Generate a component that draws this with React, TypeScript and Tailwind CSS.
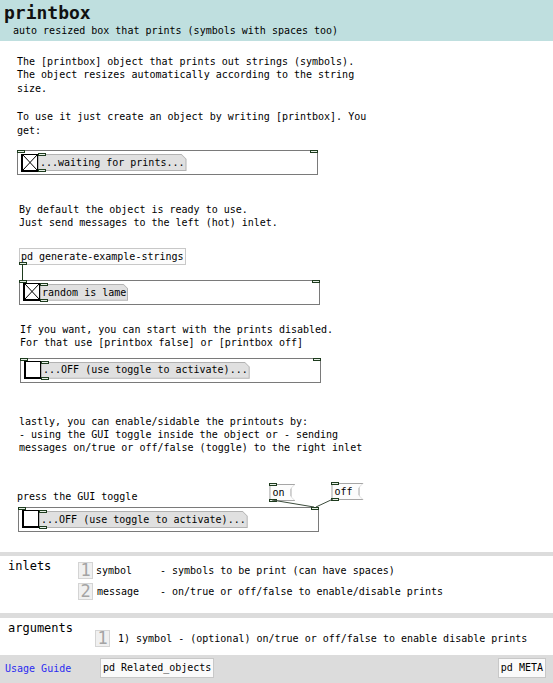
import React from "react";

function Nub({ className }: { className: string }) {
  return (
    <span
      className={
        "absolute block w-[8px] h-[3px] border border-[#1e3b1e] bg-[#e6efe6] " +
        className
      }
    />
  );
}

function Toggle({ on }: { on: boolean }) {
  return (
    <svg width="17" height="18" viewBox="0 0 17 18" className="block shrink-0">
      <rect x="0.5" y="0.5" width="16" height="17" fill="#fff" stroke="#000" />
      <rect x="0" y="0" width="2" height="18" fill="#000" />
      <rect x="0" y="16" width="17" height="2" fill="#000" />
      {on && (
        <>
          <line x1="2" y1="1" x2="16" y2="16" stroke="#000" strokeWidth="1" />
          <line x1="16" y1="1" x2="2" y2="16" stroke="#000" strokeWidth="1" />
        </>
      )}
    </svg>
  );
}

function Atom({ text }: { text: string }) {
  return (
    <div className="relative">
      <div className="h-[17px] bg-[#b2b2b2] p-px [clip-path:polygon(0_0,calc(100%_-_5px)_0,100%_5px,100%_100%,0_100%)]">
        <div className="h-full bg-[#e0e0e0] flex items-center pl-[1px] pr-[1px] whitespace-pre [clip-path:polygon(0_0,calc(100%_-_4px)_0,100%_4px,100%_100%,0_100%)]">
          {text}
        </div>
      </div>
      <Nub className="top-[-1px] left-0" />
      <Nub className="bottom-[-1px] left-0" />
    </div>
  );
}

function PrintBox({ on, text, className }: { on: boolean; text: string; className: string }) {
  return (
    <div className={"relative h-[25px] w-[301px] border border-[#7a7a7a] bg-white " + className}>
      <Nub className="top-[-1px] left-[-1px]" />
      <Nub className="top-[-1px] right-[-1px]" />
      <div className="flex items-center h-full pl-[3px]">
        <Toggle on={on} />
        <Atom text={text} />
      </div>
    </div>
  );
}

function Msg({ text, className }: { text: string; className: string }) {
  return (
    <div className={"relative " + className}>
      <div className="h-[17px] bg-[#a6a6a6] p-px [clip-path:polygon(0_0,100%_0,calc(100%_-_4px)_4px,calc(100%_-_4px)_calc(100%_-_4px),100%_100%,0_100%)]">
        <div className="h-full bg-[#fcfcfc] flex items-center pl-[2px] pr-[10px] [clip-path:polygon(0_0,100%_0,calc(100%_-_4px)_4px,calc(100%_-_4px)_calc(100%_-_4px),100%_100%,0_100%)]">
          {text}
        </div>
      </div>
      <Nub className="top-[-1px] left-0" />
      <Nub className="bottom-[-1px] left-0" />
    </div>
  );
}

function NumBox({ n, className }: { n: string; className: string }) {
  return (
    <div
      className={
        "w-[15px] h-[17px] bg-[#f0f0f0] border border-[#d4d4d4] flex items-center justify-center text-[17px] leading-none text-[#a4a4a4] " +
        className
      }
    >
      {n}
    </div>
  );
}

export default function App() {
  return (
    <div className="w-[553px] h-[683px] bg-white text-black font-['DejaVu_Sans_Mono',monospace] text-[10px] leading-[13.4px] overflow-hidden flex flex-col">
      {/* header */}
      <div className="h-[41px] bg-[#bfdfdf] shrink-0">
        <div className="pl-[4px] pt-[2px] text-[18px] leading-[22px] font-bold text-[#111]">printbox</div>
        <div className="pl-[13px] leading-[13px]">auto resized box that prints (symbols with spaces too)</div>
      </div>

      <div className="pl-[17px] mt-[14px] whitespace-pre">
        <div>The [printbox] object that prints out strings (symbols).</div>
        <div>The object resizes automatically according to the string</div>
        <div>size.</div>
      </div>
      <div className="pl-[17px] mt-[15px] whitespace-pre">
        <div>To use it just create an object by writing [printbox]. You</div>
        <div>get:</div>
      </div>

      <PrintBox on={true} text="...waiting for prints..." className="ml-[17px] mt-[13px]" />

      <div className="pl-[19px] mt-[28px] whitespace-pre">
        <div>By default the object is ready to use.</div>
        <div>Just send messages to the left (hot) inlet.</div>
      </div>

      <div className="relative ml-[19px] mt-[18px]">
        <div className="relative w-[167px] h-[17px] bg-[#fcfcfc] border border-[#c8c8c8] flex items-center pl-[1px] whitespace-pre">
          pd generate-example-strings
          <Nub className="bottom-[-1px] left-[-1px]" />
        </div>
        <div className="ml-[3px] w-px h-[15px] bg-[#1e3b1e]" />
        <PrintBox on={true} text="random is lame" className="" />
      </div>

      <div className="pl-[20px] mt-[18px] whitespace-pre">
        <div>If you want, you can start with the prints disabled.</div>
        <div>For that use [printbox false] or [printbox off]</div>
      </div>

      <PrintBox on={false} text="...OFF (use toggle to activate)..." className="ml-[20px] mt-[8px]" />

      <div className="pl-[19px] mt-[32px] whitespace-pre">
        <div>lastly, you can enable/sidable the printouts by:</div>
        <div>- using the GUI toggle inside the object or - sending</div>
        <div>messages on/true or off/false (toggle) to the right inlet</div>
      </div>

      <div className="relative mt-[27px]">
        <div className="flex items-end h-[25px]">
          <div className="pl-[17px] whitespace-pre mb-[3px]">press the GUI toggle</div>
          <Msg text="on" className="ml-[132px] mb-[6px]" />
          <Msg text="off" className="ml-[36px] mb-[7px]" />
        </div>
        <PrintBox on={false} text="...OFF (use toggle to activate)..." className="ml-[18px]" />
        <svg className="absolute left-0 top-0 pointer-events-none" width="553" height="60">
          <line x1="272" y1="18" x2="314" y2="25" stroke="#3c4c3c" strokeWidth="1" />
          <line x1="333" y1="17" x2="316" y2="25" stroke="#3c4c3c" strokeWidth="1" />
        </svg>
      </div>

      {/* inlets */}
      <div className="mt-[20px] h-[4px] bg-[#dcdcdc]" />
      <div className="relative h-[57px] flex">
        <div className="pl-[8px] pt-[3px] text-[12px] leading-[14px] w-[78px]">inlets</div>
        <div className="flex flex-col gap-[4px] pt-[6px]">
          <div className="flex items-center">
            <NumBox n="1" className="" />
            <div className="ml-[3px] w-[64px]">symbol</div>
            <div>- symbols to be print (can have spaces)</div>
          </div>
          <div className="flex items-center">
            <NumBox n="2" className="" />
            <div className="ml-[4px] w-[63px]">message</div>
            <div>- on/true or off/false to enable/disable prints</div>
          </div>
        </div>
      </div>
      <div className="h-[5px] bg-[#dcdcdc]" />

      {/* arguments */}
      <div className="h-[37px] flex">
        <div className="pl-[8px] pt-[3px] text-[12px] leading-[14px] w-[95px]">arguments</div>
        <div className="flex items-center pt-[12px] self-start">
          <NumBox n="1" className="" />
          <div className="ml-[8px]">1) symbol - (optional) on/true or off/false to enable disable prints</div>
        </div>
      </div>

      {/* footer */}
      <div className="flex-1 bg-[#dcdcdc] flex items-start pt-[3px]">
        <div className="pl-[5px] pt-[4px] text-[#2b2bf0] w-[100px]">Usage Guide</div>
        <div className="h-[20px] px-[2px] bg-[#fafafa] border border-[#c8c8c8] flex items-center">pd Related_objects</div>
        <div className="ml-auto mr-[7px] h-[20px] px-[2px] bg-[#fafafa] border border-[#c8c8c8] flex items-center">pd META</div>
      </div>
    </div>
  );
}
